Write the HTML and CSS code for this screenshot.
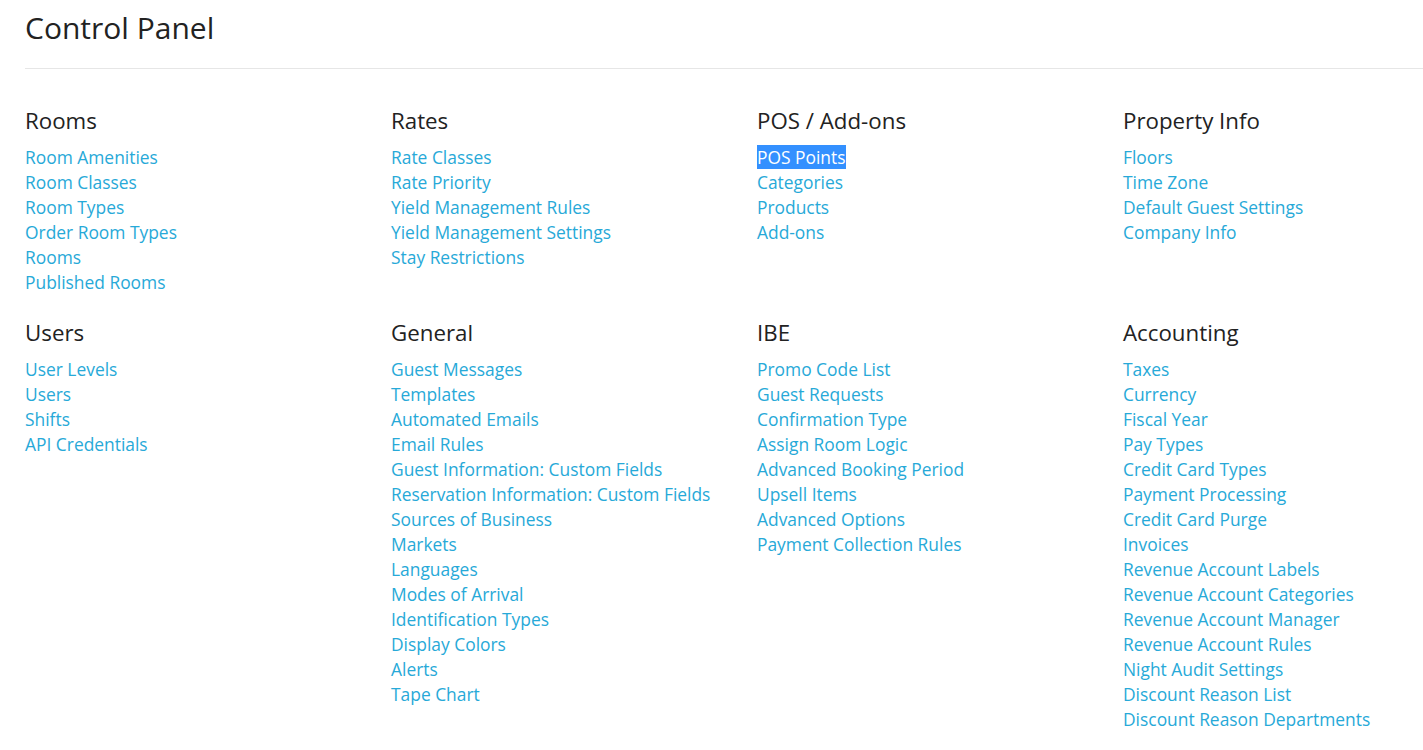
FILE: index.html
```html
<!DOCTYPE html>
<html>
<head>
<meta charset="utf-8">
<title>Control Panel</title>
<link rel="stylesheet" href="styles.css">
</head>
<body>
<div class="page">
  <h1 class="title">Control Panel</h1>
  <div class="rule"></div>
  <div class="grid">
    <section class="group">
      <h2 class="group-title">Rooms</h2>
      <ul class="links">
        <li><a href="#">Room Amenities</a></li>
        <li><a href="#">Room Classes</a></li>
        <li><a href="#">Room Types</a></li>
        <li><a href="#">Order Room Types</a></li>
        <li><a href="#">Rooms</a></li>
        <li><a href="#">Published Rooms</a></li>
      </ul>
    </section>
    <section class="group">
      <h2 class="group-title">Rates</h2>
      <ul class="links">
        <li><a href="#">Rate Classes</a></li>
        <li><a href="#">Rate Priority</a></li>
        <li><a href="#">Yield Management Rules</a></li>
        <li><a href="#">Yield Management Settings</a></li>
        <li><a href="#">Stay Restrictions</a></li>
      </ul>
    </section>
    <section class="group">
      <h2 class="group-title">POS / Add-ons</h2>
      <ul class="links">
        <li><a href="#"><span class="selected">POS Points</span></a></li>
        <li><a href="#">Categories</a></li>
        <li><a href="#">Products</a></li>
        <li><a href="#">Add-ons</a></li>
      </ul>
    </section>
    <section class="group">
      <h2 class="group-title">Property Info</h2>
      <ul class="links">
        <li><a href="#">Floors</a></li>
        <li><a href="#">Time Zone</a></li>
        <li><a href="#">Default Guest Settings</a></li>
        <li><a href="#">Company Info</a></li>
      </ul>
    </section>
    <section class="group">
      <h2 class="group-title">Users</h2>
      <ul class="links">
        <li><a href="#">User Levels</a></li>
        <li><a href="#">Users</a></li>
        <li><a href="#">Shifts</a></li>
        <li><a href="#">API Credentials</a></li>
      </ul>
    </section>
    <section class="group">
      <h2 class="group-title">General</h2>
      <ul class="links">
        <li><a href="#">Guest Messages</a></li>
        <li><a href="#">Templates</a></li>
        <li><a href="#">Automated Emails</a></li>
        <li><a href="#">Email Rules</a></li>
        <li><a href="#">Guest Information: Custom Fields</a></li>
        <li><a href="#">Reservation Information: Custom Fields</a></li>
        <li><a href="#">Sources of Business</a></li>
        <li><a href="#">Markets</a></li>
        <li><a href="#">Languages</a></li>
        <li><a href="#">Modes of Arrival</a></li>
        <li><a href="#">Identification Types</a></li>
        <li><a href="#">Display Colors</a></li>
        <li><a href="#">Alerts</a></li>
        <li><a href="#">Tape Chart</a></li>
      </ul>
    </section>
    <section class="group">
      <h2 class="group-title">IBE</h2>
      <ul class="links">
        <li><a href="#">Promo Code List</a></li>
        <li><a href="#">Guest Requests</a></li>
        <li><a href="#">Confirmation Type</a></li>
        <li><a href="#">Assign Room Logic</a></li>
        <li><a href="#">Advanced Booking Period</a></li>
        <li><a href="#">Upsell Items</a></li>
        <li><a href="#">Advanced Options</a></li>
        <li><a href="#">Payment Collection Rules</a></li>
      </ul>
    </section>
    <section class="group">
      <h2 class="group-title">Accounting</h2>
      <ul class="links">
        <li><a href="#">Taxes</a></li>
        <li><a href="#">Currency</a></li>
        <li><a href="#">Fiscal Year</a></li>
        <li><a href="#">Pay Types</a></li>
        <li><a href="#">Credit Card Types</a></li>
        <li><a href="#">Payment Processing</a></li>
        <li><a href="#">Credit Card Purge</a></li>
        <li><a href="#">Invoices</a></li>
        <li><a href="#">Revenue Account Labels</a></li>
        <li><a href="#">Revenue Account Categories</a></li>
        <li><a href="#">Revenue Account Manager</a></li>
        <li><a href="#">Revenue Account Rules</a></li>
        <li><a href="#">Night Audit Settings</a></li>
        <li><a href="#">Discount Reason List</a></li>
        <li><a href="#">Discount Reason Departments</a></li>
      </ul>
    </section>
  </div>
</div>
</body>
</html>
```
FILE: styles.css
```css
html, body {
  margin: 0;
  padding: 0;
  background: #ffffff;
  overflow: hidden;
}
body {
  font-family: "Open Sans", "Noto Sans", sans-serif;
  color: #222222;
}
.page {
  padding-left: 25px;
}
.title {
  margin: 0;
  padding-top: 8px;
  font-size: 30px;
  line-height: 40px;
  font-weight: 400;
  color: #222222;
}
.rule {
  margin-top: 20px;
  border-top: 1px solid #e6e6e6;
}
.grid {
  display: grid;
  grid-template-columns: 366px 366px 366px 1fr;
  row-gap: 23px;
  padding-top: 37px;
}
.group-title {
  margin: 0 0 9px 0;
  font-size: 22.3px;
  line-height: 30px;
  font-weight: 400;
  color: #222222;
}
.links {
  list-style: none;
  margin: 0;
  padding: 0;
}
.links li {
  font-size: 17.4px;
  line-height: 25px;
}
.links a {
  color: #27a9d8;
  text-decoration: none;
}
.selected {
  background: #3390ff;
  color: #ffffff;
}
```
